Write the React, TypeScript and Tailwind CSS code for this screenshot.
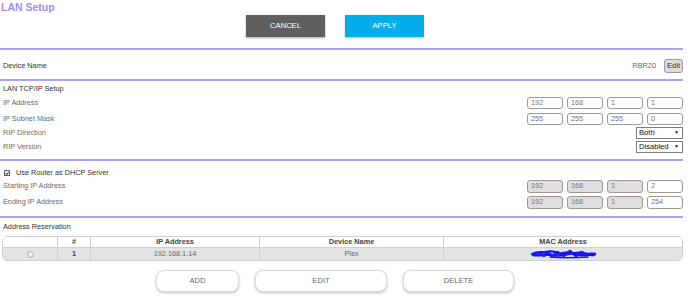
import React from 'react';

const Line = () => <div className="h-[2px] bg-[#a9a3f6]" />;

function IpBox({ v, dis }: { v: string; dis?: boolean }) {
  return (
    <div
      className={`w-[36px] h-full border border-[#a39891] rounded-[3px] pl-[3px] flex items-center text-[#777] ${
        dis ? 'bg-[#dedede]' : 'bg-white'
      }`}
    >
      {v}
    </div>
  );
}

function IpGroup({ parts, dis = 0 }: { parts: string[]; dis?: number }) {
  return (
    <div className="flex h-full items-end">
      {parts.map((p, i) => (
        <React.Fragment key={i}>
          {i > 0 && <span className="w-[4px] text-center text-[#999] leading-[6px]">.</span>}
          <IpBox v={p} dis={i < dis} />
        </React.Fragment>
      ))}
    </div>
  );
}

function Select({ label }: { label: string }) {
  return (
    <div className="w-[47px] h-full border border-[#7d7d7d] bg-white flex items-center justify-between pl-[2px] pr-[3px] text-[#111] text-[7.6px]">
      <span>{label}</span>
      <span className="text-[5px]">▼</span>
    </div>
  );
}

function Row({ label, h, mt, dark, children }: { label: string; h: string; mt: string; dark?: boolean; children?: React.ReactNode }) {
  return (
    <div className={`flex items-center justify-between pl-[3px] ${h} ${mt}`}>
      <span className={dark ? 'text-[#333]' : 'text-[#6a6a6a]'}>{label}</span>
      {children && <div className="h-full flex">{children}</div>}
    </div>
  );
}

function Scribble() {
  return (
    <svg width="67" height="10" viewBox="0 0 67 10">
      <g fill="none" stroke="#1616ee" strokeWidth="2.4" strokeLinecap="round" strokeLinejoin="round">
        <path d="M2 5 C8 2 12 4 16 3 S24 2 28 4 S36 2 40 4 S50 2 54 4 S62 4 65 5" />
        <path d="M3 6 C10 7 16 5 22 6 S32 7 38 5 S48 7 56 6 S62 7 64 6" />
        <path d="M10 4 L14 7 L18 3 L22 7 L28 3 M34 7 L40 2 L46 7 L52 3" />
        <path d="M20 8 C30 9 44 9 58 8" strokeWidth="1.5" />
      </g>
    </svg>
  );
}

export default function App() {
  return (
    <div className="w-[690px] h-[300px] bg-white overflow-hidden font-['Liberation_Sans',Arial,sans-serif] text-[7.3px]">
      <div className="w-[683px]">
        {/* header */}
        <div className="h-[48px]">
          <div className="h-[15px] pt-[1px] pl-[1px] text-[10.5px] leading-[13px] font-bold text-[#9b8ef2]">LAN Setup</div>
          <div className="flex justify-center gap-[20px] pr-[13px] h-[22px]">
            <button className="w-[79px] h-full bg-[#5f5f5f] text-white text-[7.6px] shadow-[0_1px_2px_rgba(0,0,0,0.35)]">CANCEL</button>
            <button className="w-[79px] h-full bg-[#02aeea] text-white text-[7.6px] shadow-[0_1px_2px_rgba(0,0,0,0.25)]">APPLY</button>
          </div>
        </div>
        <Line />

        {/* device name */}
        <div className="h-[29px] pt-[3px] flex items-center justify-between pl-[3px]">
          <span className="text-[#333]">Device Name</span>
          <div className="flex items-center gap-[8px]">
            <span className="text-[#666]">RBR20</span>
            <button className="w-[19px] h-[14px] bg-[#dcdcdc] border border-[#9a9a9a] rounded-[3px] text-[#333] text-[7.6px] leading-none">Edit</button>
          </div>
        </div>
        <Line />

        {/* LAN TCP/IP */}
        <Row label="LAN TCP/IP Setup" h="h-[13px]" mt="mt-[2px]" dark />
        <Row label="IP Address" h="h-[12px]" mt="mt-[1px]">
          <IpGroup parts={['192', '168', '1', '1']} />
        </Row>
        <Row label="IP Subnet Mask" h="h-[12px]" mt="mt-[4px]">
          <IpGroup parts={['255', '255', '255', '0']} />
        </Row>
        <Row label="RIP Direction" h="h-[12px]" mt="mt-[2px]">
          <Select label="Both" />
        </Row>
        <Row label="RIP Version" h="h-[12px]" mt="mt-[2px]">
          <Select label="Disabled" />
        </Row>
        <div className="mt-[6px]">
          <Line />
        </div>

        {/* DHCP */}
        <div className="mt-[6px] h-[12px] flex items-center pl-[4px] gap-[6px]">
          <div className="w-[6px] h-[6px] border border-[#666] bg-[#eee] flex items-center justify-center">
            <svg width="5" height="5" viewBox="0 0 5 5">
              <path d="M0.6 2.6 L2 4 L4.5 0.8" fill="none" stroke="#111" strokeWidth="1.2" />
            </svg>
          </div>
          <span className="text-[#333]">Use Router as DHCP Server</span>
        </div>
        <Row label="Starting IP Address" h="h-[13px]" mt="mt-[1px]">
          <IpGroup parts={['192', '168', '1', '2']} dis={3} />
        </Row>
        <Row label="Ending IP Address" h="h-[13px]" mt="mt-[3px]">
          <IpGroup parts={['192', '168', '1', '254']} dis={3} />
        </Row>
        <div className="mt-[7px]">
          <Line />
        </div>

        {/* reservation */}
        <Row label="Address Reservation" h="h-[12px]" mt="mt-[3px]" dark />
        <div className="mt-[3px] ml-[2px] border border-[#cfcfcf] rounded-[5px] overflow-hidden">
          <div className="grid grid-cols-[55px_33px_169px_184px_1fr] h-[11px] font-bold text-[#444] bg-white border-b border-[#cfcfcf]">
            <div className="border-r border-[#cfcfcf]" />
            <div className="border-r border-[#cfcfcf] flex items-center justify-center">#</div>
            <div className="border-r border-[#cfcfcf] flex items-center justify-center">IP Address</div>
            <div className="border-r border-[#cfcfcf] flex items-center justify-center">Device Name</div>
            <div className="flex items-center justify-center">MAC Address</div>
          </div>
          <div className="grid grid-cols-[55px_33px_169px_184px_1fr] h-[12px] bg-[#e3e3e3] text-[#666]">
            <div className="border-r border-[#cfcfcf] flex items-center justify-center">
              <div className="w-[7px] h-[7px] rounded-full border border-[#aaa] bg-[#eee]" />
            </div>
            <div className="border-r border-[#cfcfcf] flex items-center justify-center font-bold text-[#444]">1</div>
            <div className="border-r border-[#cfcfcf] flex items-center justify-center">192.168.1.14</div>
            <div className="border-r border-[#cfcfcf] flex items-center justify-center">Plex</div>
            <div className="flex items-center justify-center">
              <Scribble />
            </div>
          </div>
        </div>

        {/* actions */}
        <div className="mt-[9px] h-[22px] flex justify-center gap-[16px] pr-[13px]">
          {[
            ['ADD', 'w-[83px]'],
            ['EDIT', 'w-[132px]'],
            ['DELETE', 'w-[111px]'],
          ].map(([t, w]) => (
            <button
              key={t}
              className={`${w} h-full bg-white border border-[#dcdcdc] rounded-[8px] text-[#666] text-[7.6px] shadow-[0_1px_3px_rgba(0,0,0,0.25)]`}
            >
              {t}
            </button>
          ))}
        </div>
      </div>
    </div>
  );
}
